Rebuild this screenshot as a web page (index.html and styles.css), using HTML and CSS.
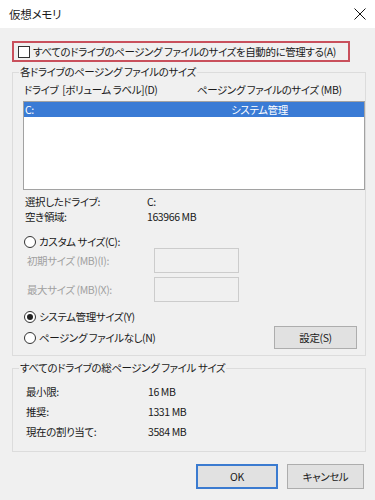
FILE: index.html
```html
<!DOCTYPE html>
<html lang="ja">
<head>
<meta charset="utf-8">
<title>仮想メモリ</title>
<link rel="stylesheet" href="styles.css">
</head>
<body>
<div class="dialog">
  <div class="titlebar">
    <span class="title">仮想メモリ</span>
    <svg class="close" width="12" height="12" viewBox="0 0 12 12"><path d="M0.5 0.5L11.5 11.5M11.5 0.5L0.5 11.5" stroke="#111" stroke-width="1" fill="none"/></svg>
  </div>
  <div class="content">
    <div class="auto-check">
      <span class="checkbox"></span>
      <span class="auto-label">すべてのドライブのページング ファイルのサイズを自動的に管理する(A)</span>
    </div>

    <fieldset class="group group-drive">
      <legend class="legend">各ドライブのページング ファイルのサイズ</legend>
      <div class="list-header">
        <span>ドライブ&nbsp;&nbsp;[ボリューム ラベル](D)</span>
        <span>ページング ファイルのサイズ (MB)</span>
      </div>
      <div class="listbox">
        <div class="list-row selected">
          <span>C:</span>
          <span>システム管理</span>
        </div>
      </div>
      <div class="info">
        <span>選択したドライブ:</span><span>C:</span>
        <span>空き領域:</span><span>163966 MB</span>
      </div>
      <div class="radio-row radio-custom">
        <span class="radio"></span><span>カスタム サイズ(C):</span>
      </div>
      <div class="size-row">
        <span class="size-label">初期サイズ (MB)(I):</span>
        <span class="size-input"></span>
      </div>
      <div class="size-row size-row-2">
        <span class="size-label">最大サイズ (MB)(X):</span>
        <span class="size-input"></span>
      </div>
      <div class="radio-row radio-system">
        <span class="radio checked"></span><span>システム管理サイズ(Y)</span>
      </div>
      <div class="last-row">
        <div class="radio-row">
          <span class="radio"></span><span>ページング ファイルなし(N)</span>
        </div>
        <button class="btn btn-set">設定(S)</button>
      </div>
    </fieldset>

    <fieldset class="group group-total">
      <legend class="legend">すべてのドライブの総ページング ファイル サイズ</legend>
      <div class="totals">
        <span>最小限:</span><span>16 MB</span>
        <span>推奨:</span><span>1331 MB</span>
        <span>現在の割り当て:</span><span>3584 MB</span>
      </div>
    </fieldset>

    <div class="buttons">
      <button class="btn btn-ok">OK</button>
      <button class="btn btn-cancel">キャンセル</button>
    </div>
  </div>
</div>
</body>
</html>
```

FILE: styles.css
```css
* { box-sizing: border-box; }
html, body {
  margin: 0;
  padding: 0;
  width: 375px;
  height: 500px;
  overflow: hidden;
  background: #f0f0f0;
}
body {
  font-family: "Noto Sans CJK JP", "Noto Sans", sans-serif;
  font-size: 10.5px;
  letter-spacing: -0.4px;
  line-height: 14px;
  color: #1a1a1a;
  font-feature-settings: "palt";
}
.dialog {
  display: flex;
  flex-direction: column;
  width: 375px;
  height: 500px;
}
.titlebar {
  height: 28px;
  background: #ffffff;
  display: flex;
  align-items: center;
  padding: 0 9px 0 9px;
}
.title { font-size: 11.5px; letter-spacing: -0.2px; }
.close { margin-left: auto; }
.content {
  flex: 1;
  background: #f0f0f0;
  padding: 13px 9px 0 12px;
  display: flex;
  flex-direction: column;
}
.auto-check {
  width: 338px;
  height: 21px;
  border: 2px solid #c9505c;
  display: flex;
  align-items: center;
  padding-left: 4px;
}
.checkbox {
  width: 12px;
  height: 12px;
  border: 1px solid #333;
  background: #fff;
  flex: none;
}
.auto-label { margin-left: 3px; white-space: nowrap; }

.group {
  margin: 0;
  padding: 0;
  min-width: 0;
  border: 1px solid #dcdcdc;
  display: flex;
  flex-direction: column;
}
.legend {
  margin-left: 6px;
  padding: 0 1px;
  line-height: 14px;
}
.group-drive { margin-top: 3px; padding-bottom: 6px; }
.list-header {
  margin-top: 4px;
  height: 14px;
  display: grid;
  grid-template-columns: 173px auto;
  padding-left: 11px;
  white-space: nowrap;
}
.listbox {
  margin-top: 4px;
  margin-left: 10px;
  height: 89px;
  background: #fff;
  border: 1px solid #a2a2a2;
}
.list-row {
  height: 15px;
  display: grid;
  grid-template-columns: 206px auto;
  padding-left: 1px;
  align-items: center;
}
.selected { background: #3a7bd5; color: #fff; }
.info {
  margin-top: 4px;
  display: grid;
  grid-template-columns: 122px auto;
  grid-auto-rows: 15px;
  align-items: center;
  padding-left: 12px;
}
.radio-row {
  display: flex;
  align-items: center;
  height: 12px;
  padding-left: 11px;
  white-space: nowrap;
}
.radio-custom { margin-top: 12px; }
.radio {
  width: 12px;
  height: 12px;
  border: 1px solid #333;
  border-radius: 50%;
  background: #fff;
  margin-right: 3px;
  flex: none;
  display: flex;
  align-items: center;
  justify-content: center;
}
.radio.checked::after {
  content: "";
  width: 6px;
  height: 6px;
  border-radius: 50%;
  background: #222;
}
.size-row {
  display: flex;
  align-items: center;
  height: 25px;
  padding-left: 14px;
  color: #a0a0a0;
}
.size-row-2 { margin-top: 4px; }
.size-label { width: 127px; white-space: nowrap; }
.size-input {
  width: 85px;
  height: 25px;
  border: 1px solid #cccccc;
  background: #f0f0f0;
}
.radio-system { margin-top: 9px; }
.last-row {
  margin-top: 3px;
  height: 23px;
  display: flex;
  align-items: center;
  justify-content: space-between;
  padding-right: 8px;
}
.btn {
  font: inherit;
  letter-spacing: inherit;
  color: #1a1a1a;
  background: #e1e1e1;
  border: 1px solid #adadad;
  padding: 0;
  margin: 0;
}
.btn-set { width: 83px; height: 23px; }

.group-total { margin-top: 5px; padding-bottom: 9px; }
.totals {
  margin-top: 7px;
  display: grid;
  grid-template-columns: 122px auto;
  grid-auto-rows: 20px;
  align-items: center;
  padding-left: 13px;
}
.buttons {
  margin-top: 12px;
  display: flex;
  justify-content: flex-end;
  gap: 9px;
  padding-right: 2px;
}
.btn-ok { width: 82px; height: 25px; border: 2px solid #3b7bd0; }
.btn-cancel { width: 77px; height: 25px; }
```
